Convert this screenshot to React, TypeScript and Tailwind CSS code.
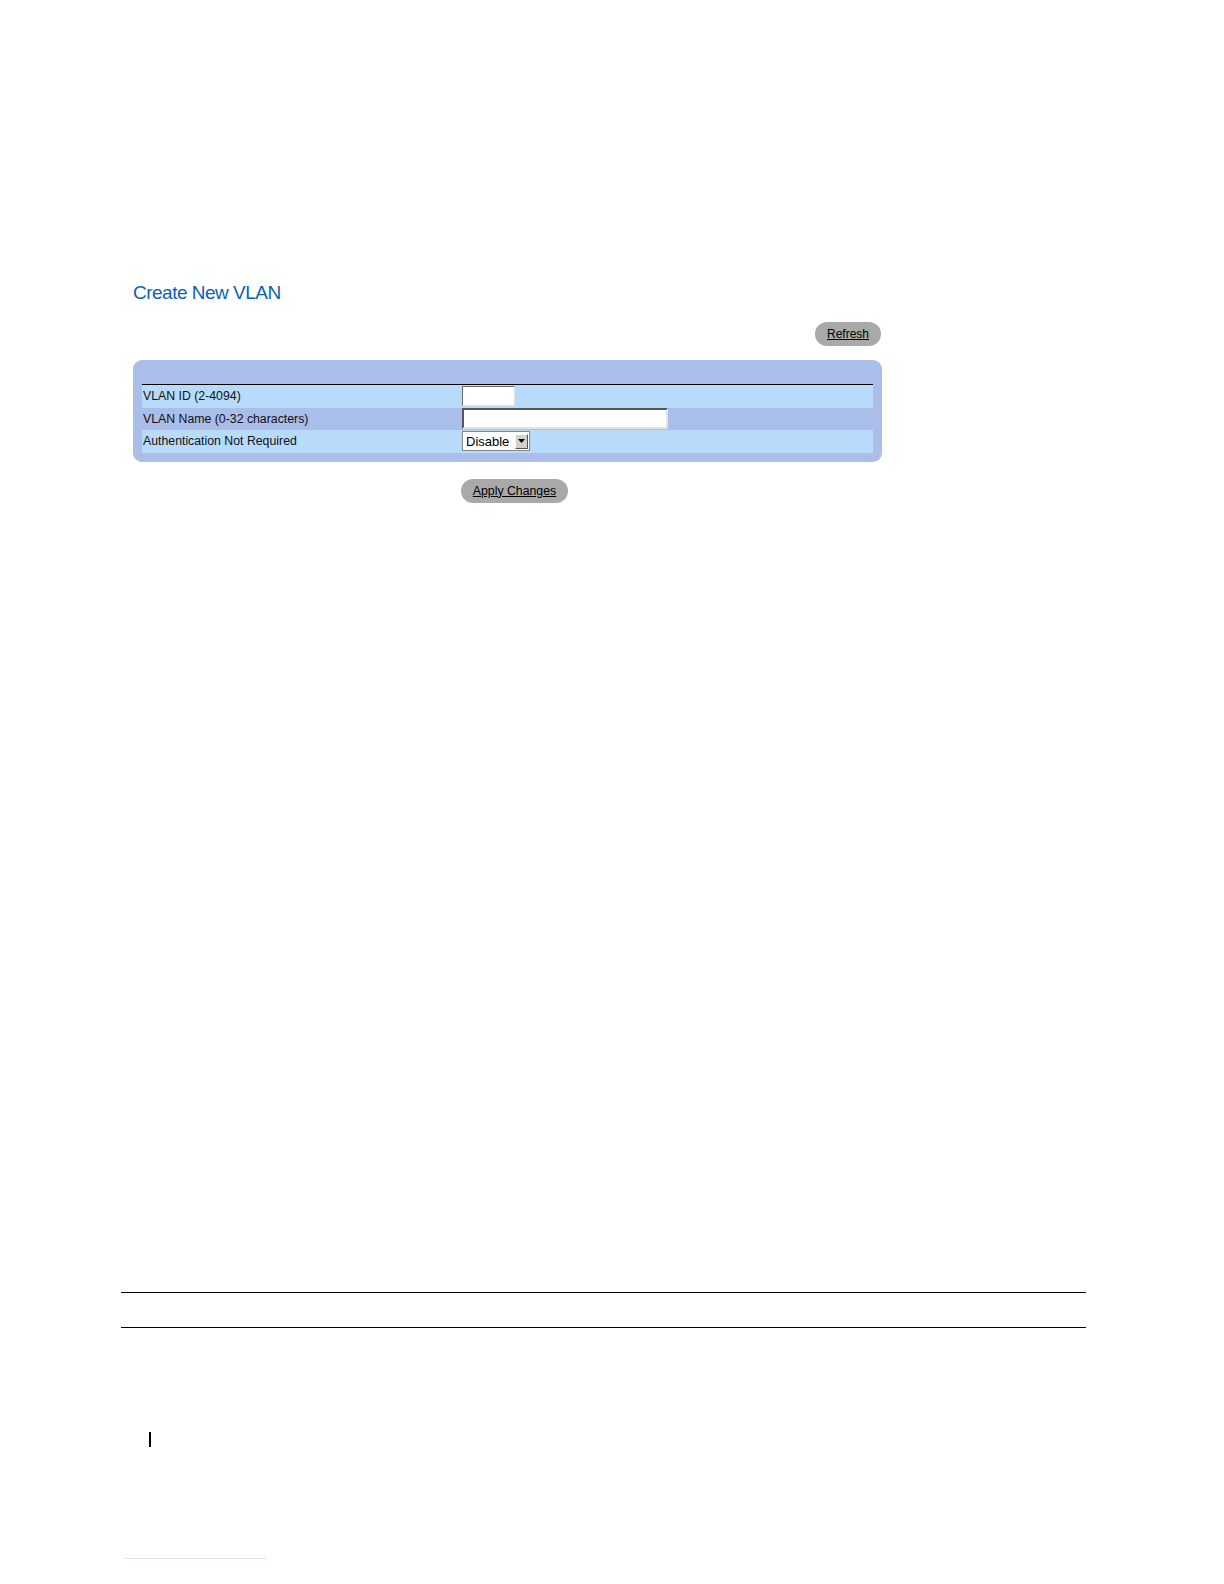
export default function App() {
  const rows = [
    { label: "VLAN ID (2-4094)", kind: "short", light: true },
    { label: "VLAN Name (0-32 characters)", kind: "long", light: false },
    { label: "Authentication Not Required", kind: "select", light: true },
  ];

  return (
    <div className="h-[1584px] w-full overflow-hidden bg-white font-['Liberation_Sans',Arial,sans-serif] text-black">
      {/* page content */}
      <div className="pt-[282px] pl-[133px] w-[882px]">
        <h1 className="text-[19px] leading-[22px] text-[#0a62b2] tracking-[-0.5px]">
          Create New VLAN
        </h1>

        <div className="flex justify-end mt-[18px]">
          <button className="h-[24px] w-[66px] rounded-full bg-[#a9a9a9] text-[12px] underline text-black mr-[1px]">
            Refresh
          </button>
        </div>

        {/* form panel */}
        <div className="mt-[14px] w-[749px] rounded-[9px] bg-[#abbde9] px-[9px] pt-[24px] pb-[9px]">
          <div className="border-t-[1.5px] border-black">
            {rows.map((row) => (
              <div
                key={row.label}
                className={`flex items-center h-[22.5px] ${row.light ? "bg-[#b8dbfb]" : "bg-[#abbde9]"}`}
              >
                <div className="w-[320px] pl-[1px] text-[12.3px] text-[#111]">
                  {row.label}
                </div>
                {row.kind === "short" && (
                  <div className="h-[20px] w-[53px] bg-white border border-t-[#6b6b6b] border-l-[#6b6b6b] border-r-[#e3e3e3] border-b-[#e3e3e3]" />
                )}
                {row.kind === "long" && (
                  <div className="h-[21px] w-[206px] bg-white border-2 border-t-[#555] border-l-[#555] border-r-[#e3e3e3] border-b-[#e3e3e3]" />
                )}
                {row.kind === "select" && (
                  <div className="flex items-center h-[20px] w-[68px] bg-white border border-[#888] pl-[3px] pr-[1px]">
                    <span className="flex-1 text-[13px] leading-none">Disable</span>
                    <span className="flex items-center justify-center w-[13px] h-[15px] bg-[#d4d0c8] border border-t-white border-l-white border-r-[#555] border-b-[#555]">
                      <svg width="7" height="4" viewBox="0 0 7 4">
                        <path d="M0 0h7L3.5 4z" fill="#000" />
                      </svg>
                    </span>
                  </div>
                )}
              </div>
            ))}
          </div>
        </div>

        <div className="pl-[328px] mt-[16px]">
          <button className="h-[24px] w-[107px] rounded-full bg-[#a9a9a9] text-[12.3px] underline text-black">
            Apply Changes
          </button>
        </div>
      </div>

      {/* footer rules */}
      <div className="mt-[789px] ml-[121px] w-[965px]">
        <div className="border-t-[1.5px] border-black" />
        <div className="mt-[34px] border-t-[1.5px] border-black" />
      </div>

      <div className="ml-[149px] mt-[104px] h-[15px] w-[1.5px] bg-black" />

      <div className="ml-[125px] mt-[111px] h-px w-[141px] bg-[#dde3ee]" />
    </div>
  );
}
